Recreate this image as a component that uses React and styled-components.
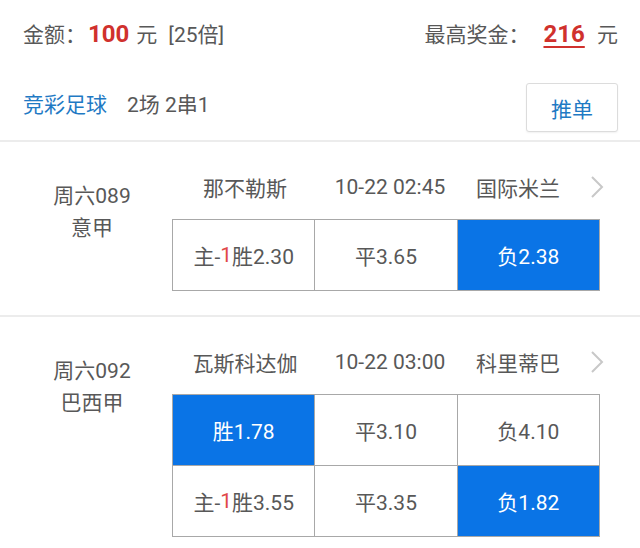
import styled, { createGlobalStyle } from "styled-components";

const GlobalStyle = createGlobalStyle`
  body {
    margin: 0;
    background: #fff;
    font-family: Roboto, "Noto Sans CJK SC", sans-serif;
    color: #585858;
  }
`;

const Header = styled.div`
  padding: 0 22px 0 23px;
  border-bottom: 2px solid #ececec;
`;

const SummaryRow = styled.div`
  height: 66px;
  display: flex;
  align-items: center;
  justify-content: space-between;
  font-size: 21px;
`;

const Amount = styled.span`
  font-size: 24px;
  font-weight: bold;
  color: #d0312d;
  margin: 0 7px 0 ${(p) => (p.$underline ? "14px" : "2px")};
  text-decoration: ${(p) => (p.$underline ? "underline" : "none")};
  text-underline-offset: 4px;
  text-decoration-thickness: 2px;
`;

const Multiple = styled.span`
  margin-left: 11px;
`;

const InfoRow = styled.div`
  height: 74px;
  display: flex;
  align-items: center;
  justify-content: space-between;
  font-size: 21px;
`;

const Lottery = styled.span`
  color: #1f7ac4;
  margin-right: 20px;
`;

const PushButton = styled.button`
  width: 92px;
  height: 49px;
  margin-top: 9px;
  border: 1px solid #dcdcdc;
  border-radius: 3px;
  background: #fff;
  color: #1f7ac4;
  font-family: inherit;
  font-size: 21px;
  box-shadow: 0 1px 2px rgba(0, 0, 0, 0.06);
`;

const Match = styled.div`
  display: grid;
  grid-template-columns: 172px 428px;
  padding: 29px 0 24px;
  border-bottom: 2px solid #ececec;
`;

const League = styled.div`
  padding: 9px 0 0 12px;
  text-align: center;
  font-size: 21px;
  line-height: 32px;
`;

const TeamRow = styled.div`
  display: grid;
  grid-template-columns: 146px 144px 112px 1fr;
  align-items: center;
  height: 32px;
  margin-bottom: 16px;
  font-size: 21px;
  text-align: center;
`;

const Chevron = styled.svg`
  margin-left: 16px;
  width: 14px;
  height: 24px;
`;

const OddsGrid = styled.div`
  display: grid;
  grid-template-columns: repeat(3, 1fr);
  gap: 1px;
  padding: 1px;
  background: #a8a8a8;
`;

const Cell = styled.div`
  height: 70px;
  display: flex;
  align-items: center;
  justify-content: center;
  font-size: 21px;
  background: ${(p) => (p.$active ? "#0a74e6" : "#fff")};
  color: ${(p) => (p.$active ? "#fff" : "#585858")};
`;

const Handicap = styled.span`
  color: #e04848;
`;

const matches = [
  {
    no: "周六089",
    league: "意甲",
    home: "那不勒斯",
    time: "10-22 02:45",
    away: "国际米兰",
    rows: [
      [
        { label: "主", hc: "1", text: "胜2.30" },
        { text: "平3.65" },
        { text: "负2.38", active: true },
      ],
    ],
  },
  {
    no: "周六092",
    league: "巴西甲",
    home: "瓦斯科达伽",
    time: "10-22 03:00",
    away: "科里蒂巴",
    rows: [
      [{ text: "胜1.78", active: true }, { text: "平3.10" }, { text: "负4.10" }],
      [
        { label: "主", hc: "1", text: "胜3.55" },
        { text: "平3.35" },
        { text: "负1.82", active: true },
      ],
    ],
  },
];

const App = () => {
  return (
    <>
      <GlobalStyle />
      <Header>
        <SummaryRow>
          <div>
            金额：<Amount>100</Amount>元<Multiple>[25倍]</Multiple>
          </div>
          <div>
            最高奖金：<Amount $underline>216</Amount> 元
          </div>
        </SummaryRow>
        <InfoRow>
          <div>
            <Lottery>竞彩足球</Lottery>2场 2串1
          </div>
          <PushButton>推单</PushButton>
        </InfoRow>
      </Header>
      {matches.map((m) => (
        <Match key={m.no}>
          <League>
            <div>{m.no}</div>
            <div>{m.league}</div>
          </League>
          <div>
            <TeamRow>
              <span>{m.home}</span>
              <span>{m.time}</span>
              <span>{m.away}</span>
              <Chevron viewBox="0 0 14 24">
                <polyline
                  points="2,2 12,12 2,22"
                  fill="none"
                  stroke="#c8c8c8"
                  strokeWidth="2"
                />
              </Chevron>
            </TeamRow>
            <OddsGrid>
              {m.rows.flat().map((c, i) => (
                <Cell key={i} $active={c.active}>
                  {c.hc ? (
                    <>
                      {c.label}-<Handicap>{c.hc}</Handicap>
                      {c.text}
                    </>
                  ) : (
                    c.text
                  )}
                </Cell>
              ))}
            </OddsGrid>
          </div>
        </Match>
      ))}
    </>
  );
};

export default App;
